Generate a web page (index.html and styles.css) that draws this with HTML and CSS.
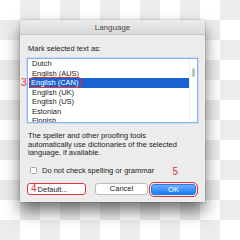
FILE: index.html
```html
<!DOCTYPE html>
<html lang="en">

<head>
    <meta charset="UTF-8">
    <title>Language</title>
    <link rel="stylesheet" href="styles.css">
</head>

<body>
    <div class="dialog">
        <div class="title-bar">Language</div>
        <div class="dialog-body">
            <p class="label">Mark selected text as:</p>

            <div class="list-wrap">
                <div class="lang-list">
                    <ul class="lang-items">
                        <li>Dutch</li>
                        <li>English (AUS)</li>
                        <li class="selected"><span class="mark">English (CAN)</span></li>
                        <li>English (UK)</li>
                        <li>English (US)</li>
                        <li>Estonian</li>
                        <li>Finnish</li>
                    </ul>
                    <div class="scroll-track">
                        <div class="scroll-thumb"></div>
                    </div>
                </div>
                <span class="step step-3">3</span>
            </div>

            <p class="note">The speller and other proofing tools<br>automatically use dictionaries of the selected<br>language, if available.</p>

            <label class="check-row">
                <span class="checkbox"></span>
                Do not check spelling or grammar
            </label>

            <div class="button-row">
                <button class="btn btn-default"><span class="step-inline">4</span>Default...</button>
                <button class="btn btn-cancel">Cancel</button>
                <button class="btn btn-ok">OK</button>
                <span class="step step-5">5</span>
            </div>
        </div>
    </div>
</body>

</html>
```

FILE: styles.css
```css
:root {
    --dialog-bg: #ececec;
    --text-dark: #222;
    --select-blue: #1a62d2;
    --mark-red: #e0333d;
    --check-gray: #ececec;
}

* {
    margin: 0;
    padding: 0;
    box-sizing: border-box;
    font-family: 'Liberation Sans', Arial, sans-serif;
}

body {
    width: 240px;
    height: 240px;
    overflow: hidden;
    padding: 20px 0 0 20px;
    background: repeating-conic-gradient(var(--check-gray) 0 25%, #ffffff 0 50%) 0 0 / 40px 40px;
}

/* Dialog window */
.dialog {
    width: 185px;
    height: 182px;
    background-color: var(--dialog-bg);
    box-shadow: 0 9px 16px rgba(0, 0, 0, 0.55), 0 0 2px rgba(0, 0, 0, 0.35);
    border-radius: 3px 3px 0 0;
}

.title-bar {
    height: 15px;
    line-height: 15px;
    text-align: center;
    font-size: 8px;
    color: #4a4a4a;
    background: linear-gradient(#ececec, #d9d9d9);
    border-bottom: 1px solid #c4c4c4;
    border-radius: 3px 3px 0 0;
}

.dialog-body {
    padding: 9px 7px 0 7px;
    font-size: 7.5px;
    color: var(--text-dark);
}

.label {
    line-height: 9px;
    padding-left: 1px;
    margin-bottom: 5px;
}

/* Language list */
.list-wrap {
    position: relative;
}

.lang-list {
    display: grid;
    grid-template-columns: 1fr 8px;
    height: 65px;
    background: #ffffff;
    border: 1px solid #8cb4ea;
    box-shadow: 0 0 0 1px #c5dbf6;
    overflow: hidden;
}

.lang-items {
    list-style: none;
    padding: 0 0 0 1px;
}

.lang-items li {
    height: 9.5px;
    line-height: 9.5px;
    padding-left: 3px;
    white-space: nowrap;
}

.lang-items li.selected {
    background-color: var(--select-blue);
    color: #ffffff;
}

.mark {
    outline: 1px solid var(--mark-red);
    border-radius: 3px;
    padding: 0 2px 0 1px;
    margin-left: -2px;
}

.scroll-track {
    position: relative;
    border-left: 1px solid #ececec;
}

.scroll-thumb {
    position: absolute;
    left: 2px;
    top: 9px;
    width: 3px;
    height: 9px;
    border-radius: 2px;
    background: #c2c2c2;
}

/* Annotation numbers */
.step {
    position: absolute;
    color: var(--mark-red);
    font-size: 10px;
    line-height: 10px;
}

.step-3 {
    left: -6px;
    top: 20px;
}

.step-5 {
    right: 20px;
    top: -16px;
}

.step-inline {
    color: var(--mark-red);
    font-size: 10px;
    margin-right: 1px;
}

.note {
    margin-top: 9px;
    line-height: 8.5px;
    padding-left: 1px;
}

.check-row {
    display: flex;
    align-items: center;
    gap: 5px;
    margin-top: 9px;
    padding-left: 3px;
    line-height: 8px;
}

.checkbox {
    width: 7px;
    height: 7px;
    border: 1px solid #a8a8a8;
    border-radius: 1.5px;
    background: #ffffff;
}

/* Buttons */
.button-row {
    position: relative;
    display: flex;
    align-items: center;
    margin-top: 8px;
    height: 13px;
}

.btn {
    height: 12px;
    font-size: 7.5px;
    line-height: 10px;
    color: var(--text-dark);
    background: #ffffff;
    border: 1px solid #bdbdbd;
    border-radius: 3px;
}

.btn-default {
    width: 59px;
    text-align: left;
    padding-left: 3px;
    border: 1px solid var(--mark-red);
}

.btn-cancel {
    width: 53px;
    margin-left: auto;
    margin-right: 3px;
}

.btn-ok {
    width: 45px;
    margin-right: 2px;
    height: 11px;
    line-height: 9px;
    color: #ffffff;
    border: 1px solid #2a78e4;
    background: linear-gradient(#6ab0fb, #1a7df8);
    outline: 1px solid var(--mark-red);
    outline-offset: 1px;
}
```
